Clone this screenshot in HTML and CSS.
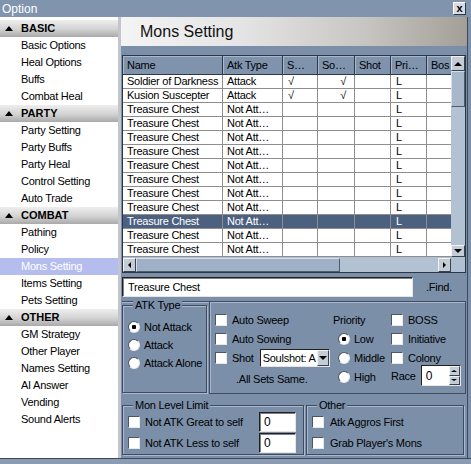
FILE: index.html
```html
<!DOCTYPE html>
<html>
<head>
<meta charset="utf-8">
<title>Option</title>
<link rel="stylesheet" href="styles.css">
</head>
<body>
<div class="window">
  <div class="titlebar"><span class="title">Option</span><span class="close">x</span></div>
  <div class="body">
    <nav class="sidebar">
      <div class="group-head"><span class="tri"></span>BASIC</div>
      <div class="item">Basic Options</div>
      <div class="item">Heal Options</div>
      <div class="item">Buffs</div>
      <div class="item">Combat Heal</div>
      <div class="group-head"><span class="tri"></span>PARTY</div>
      <div class="item">Party Setting</div>
      <div class="item">Party Buffs</div>
      <div class="item">Party Heal</div>
      <div class="item">Control Setting</div>
      <div class="item">Auto Trade</div>
      <div class="group-head"><span class="tri"></span>COMBAT</div>
      <div class="item">Pathing</div>
      <div class="item">Policy</div>
      <div class="item selected">Mons Setting</div>
      <div class="item">Items Setting</div>
      <div class="item">Pets Setting</div>
      <div class="group-head"><span class="tri"></span>OTHER</div>
      <div class="item">GM Strategy</div>
      <div class="item">Other Player</div>
      <div class="item">Names Setting</div>
      <div class="item">AI Answer</div>
      <div class="item">Vending</div>
      <div class="item">Sound Alerts</div>
    </nav>
    <main class="main">
      <div class="heading">Mons Setting</div>
      <div class="grid">
        <div class="grid-left">
          <div class="table-clip">
            <div class="row head"><span>Name</span><span>Atk Type</span><span>S…</span><span>So…</span><span>Shot</span><span>Pri…</span><span>Bos</span></div>
            <div class="row"><span>Soldier of Darkness</span><span>Attack</span><span class="ck-l">√</span><span class="ck-r">√</span><span></span><span class="pri">L</span><span></span></div>
            <div class="row"><span>Kusion Suscepter</span><span>Attack</span><span class="ck-l">√</span><span class="ck-r">√</span><span></span><span class="pri">L</span><span></span></div>
            <div class="row"><span>Treasure Chest</span><span>Not Att…</span><span></span><span></span><span></span><span class="pri">L</span><span></span></div>
            <div class="row"><span>Treasure Chest</span><span>Not Att…</span><span></span><span></span><span></span><span class="pri">L</span><span></span></div>
            <div class="row"><span>Treasure Chest</span><span>Not Att…</span><span></span><span></span><span></span><span class="pri">L</span><span></span></div>
            <div class="row"><span>Treasure Chest</span><span>Not Att…</span><span></span><span></span><span></span><span class="pri">L</span><span></span></div>
            <div class="row"><span>Treasure Chest</span><span>Not Att…</span><span></span><span></span><span></span><span class="pri">L</span><span></span></div>
            <div class="row"><span>Treasure Chest</span><span>Not Att…</span><span></span><span></span><span></span><span class="pri">L</span><span></span></div>
            <div class="row"><span>Treasure Chest</span><span>Not Att…</span><span></span><span></span><span></span><span class="pri">L</span><span></span></div>
            <div class="row"><span>Treasure Chest</span><span>Not Att…</span><span></span><span></span><span></span><span class="pri">L</span><span></span></div>
            <div class="row sel"><span>Treasure Chest</span><span>Not Att…</span><span></span><span></span><span></span><span class="pri">L</span><span></span></div>
            <div class="row"><span>Treasure Chest</span><span>Not Att…</span><span></span><span></span><span></span><span class="pri">L</span><span></span></div>
            <div class="row"><span>Treasure Chest</span><span>Not Att…</span><span></span><span></span><span></span><span class="pri">L</span><span></span></div>
            <div class="row"><span></span><span></span><span></span><span></span><span></span><span></span><span></span></div>
          </div>
          <div class="hscroll">
            <span class="sbtn"><span class="arr-l"></span></span>
            <span class="hthumb"></span>
            <span class="htrack"></span>
            <span class="sbtn"><span class="arr-r"></span></span>
          </div>
        </div>
        <div class="vscroll">
          <span class="sbtn up"><span class="arr-u"></span></span>
          <span class="vthumb"></span>
          <span class="vtrack"></span>
          <span class="sbtn down"><span class="arr-d"></span></span>
          <span class="corner"></span>
        </div>
      </div>
      <div class="search">
        <div class="textbox wide">Treasure Chest</div>
        <span class="find">.Find.</span>
      </div>
      <div class="settings">
        <fieldset class="atk">
          <legend>ATK Type</legend>
          <div class="opt"><span class="radio on"></span>Not Attack</div>
          <div class="opt"><span class="radio"></span>Attack</div>
          <div class="opt"><span class="radio"></span>Attack Alone</div>
        </fieldset>
        <div class="opts">
          <div class="opt"><span class="cb"></span>Auto Sweep</div>
          <div class="lbl">Priority</div>
          <div class="opt"><span class="cb"></span>BOSS</div>

          <div class="opt"><span class="cb"></span>Auto Sowing</div>
          <div class="opt ind"><span class="radio on"></span>Low</div>
          <div class="opt"><span class="cb"></span>Initiative</div>

          <div class="opt"><span class="cb"></span>Shot<span class="select">Soulshot: A<span class="dd"><span class="arr-d"></span></span></span></div>
          <div class="opt ind"><span class="radio"></span>Middle</div>
          <div class="opt"><span class="cb"></span>Colony</div>

          <div class="allsets">.All Sets Same.</div>
          <div class="opt ind"><span class="radio"></span>High</div>
          <div class="opt race">Race<span class="spin"><span class="spin-val">0</span><span class="spin-btns"><span class="sp"><span class="arr-u sm"></span></span><span class="sp"><span class="arr-d sm"></span></span></span></span></div>
        </div>
      </div>
      <div class="limits">
        <fieldset class="mll">
          <legend>Mon Level Limit</legend>
          <div class="lrow"><span class="cb"></span><span class="ltxt">Not ATK Great to self</span><span class="textbox num">0</span></div>
          <div class="lrow"><span class="cb"></span><span class="ltxt">Not ATK Less to self</span><span class="textbox num">0</span></div>
        </fieldset>
        <fieldset class="other">
          <legend>Other</legend>
          <div class="lrow"><span class="cb"></span><span class="ltxt">Atk Aggros First</span></div>
          <div class="lrow"><span class="cb"></span><span class="ltxt">Grab Player's Mons</span></div>
        </fieldset>
      </div>
    </main>
  </div>
  <div class="statusbar"></div>
</div>
</body>
</html>
```

FILE: styles.css
```css
* { box-sizing: border-box; }
html, body { margin: 0; padding: 0; }
body {
  width: 471px;
  height: 464px;
  overflow: hidden;
  font-family: "Liberation Sans", Arial, sans-serif;
  font-size: 11px;
  letter-spacing: -0.25px;
  color: #000;
  background: #7b8fa9;
}
.window { width: 471px; height: 464px; display: flex; flex-direction: column; }

.titlebar {
  height: 17px;
  background: #8094ae;
  display: flex;
  align-items: center;
  justify-content: space-between;
  padding: 0 5px 0 2px;
}
.title { color: #fff; font-size: 12px; letter-spacing: 0; }
.close {
  width: 13px; height: 13px;
  background: #d8dce2;
  border: 1px solid;
  border-color: #fff #303840 #303840 #fff;
  font-weight: bold;
  font-size: 11px;
  line-height: 10px;
  text-align: center;
}

.body { height: 441px; display: flex; }

.sidebar {
  width: 121px;
  background: #fff;
  border-right: 3px solid #c2c6cc;
  padding-top: 3px;
}
.group-head {
  height: 17px;
  line-height: 17px;
  font-weight: bold;
  letter-spacing: 0;
  display: flex;
  align-items: center;
  background: linear-gradient(to bottom, #eeeeee 0%, #d2d2d2 55%, #a9a9a9 100%);
}
.tri {
  width: 0; height: 0;
  margin: 0 8px 1px 5px;
  border-left: 4px solid transparent;
  border-right: 4px solid transparent;
  border-bottom: 5px solid #000;
}
.item { height: 17px; line-height: 17px; padding-left: 21px; }
.item.selected { background: #b5bdef; color: #fff; }

.main {
  width: 347px;
  border-right: 1px solid #3c495c;
  display: flex;
  flex-direction: column;
}
.heading {
  height: 29px;
  line-height: 29px;
  padding-left: 19px;
  font-size: 16px;
  letter-spacing: 0;
  color: #111;
  background: linear-gradient(to right, #f4f4f4 0%, #e4e4e4 35%, #c8c6c2 70%, #a39f98 100%);
}

.grid {
  margin: 9px 0 0 1px;
  width: 344px;
  height: 218px;
  border: 1px solid #2c3646;
  display: flex;
}
.grid-left { width: 328px; display: flex; flex-direction: column; }
.table-clip { height: 201px; overflow: hidden; background: #fff; }
.row {
  display: grid;
  grid-template-columns: 100px 60px 35px 37px 36px 36px 60px;
  height: 14px;
  border-bottom: 1px solid #8e8e8e;
  white-space: nowrap;
}
.row span {
  border-right: 1px solid #8e8e8e;
  padding-left: 4px;
  line-height: 13px;
  overflow: hidden;
}
.row.head { height: 19px; border-bottom: 1px solid #2e3848; background: #7f93ad; }
.row.head span {
  line-height: 18px;
  border-right: 1px solid #2e3848;
  box-shadow: inset 1px 1px 0 #a9b9cd;
}
.row.sel { background: #4c6080; color: #fff; }
.row .ck-l { padding-left: 5px; }
.row .ck-r { padding-left: 0; padding-right: 8px; text-align: right; }
.row .pri { padding-left: 5px; }

.hscroll { height: 15px; display: flex; background: #b0bfd1; border-top: 1px solid #b0bfd1; }
.sbtn {
  width: 13px;
  height: 14px;
  background: #c4ccd6;
  border: 1px solid;
  border-color: #f0f2f4 #3a4450 #3a4450 #f0f2f4;
  display: flex;
  align-items: center;
  justify-content: center;
  flex: none;
}
.hthumb {
  width: 204px;
  background: #9fb1c6;
  border: 1px solid;
  border-color: #d4dde8 #4e5c70 #4e5c70 #d4dde8;
}
.htrack { flex: 1; background: #b3c2d3; }

.vscroll { width: 14px; display: flex; flex-direction: column; background: #b3c2d3; }
.vscroll .sbtn { width: 14px; height: 15px; }
.vscroll .sbtn.down { height: 12px; }
.vthumb {
  height: 36px;
  background: #a8b8cb;
  border: 1px solid;
  border-color: #d4dde8 #4e5c70 #4e5c70 #d4dde8;
}
.vtrack { flex: 1; }
.corner { height: 15px; background: #b0bfd1; }

.arr-l { width: 0; height: 0; border-top: 3px solid transparent; border-bottom: 3px solid transparent; border-right: 3px solid #000; }
.arr-r { width: 0; height: 0; border-top: 3px solid transparent; border-bottom: 3px solid transparent; border-left: 3px solid #000; }
.arr-u { width: 0; height: 0; border-left: 4px solid transparent; border-right: 4px solid transparent; border-bottom: 4px solid #000; }
.arr-d { width: 0; height: 0; border-left: 4px solid transparent; border-right: 4px solid transparent; border-top: 4px solid #000; }
.arr-u.sm { border-left-width: 3px; border-right-width: 3px; border-bottom-width: 2px; }
.arr-d.sm { border-left-width: 3px; border-right-width: 3px; border-top-width: 2px; }

.search { margin-top: 4px; height: 20px; display: flex; align-items: center; }
.textbox {
  background: #fff;
  border: 1px solid;
  border-color: #202020 #e6e6e6 #e6e6e6 #202020;
  box-shadow: inset 1px 1px 0 #808080;
  padding-left: 5px;
  display: flex;
  align-items: center;
}
.textbox.wide { margin-left: 1px; width: 291px; height: 20px; }
.find { margin-left: 13px; }

.settings {
  margin-top: 4px;
  margin-left: 1px;
  width: 344px;
  height: 93px;
  display: flex;
  border-top: 1px solid #3e4b60;
  box-shadow: inset 0 1px 0 #a9b8cc;
}
fieldset {
  margin: 0;
  padding: 0;
  border: 1px solid #3e4b60;
  box-shadow: inset 1px 1px 0 #a9b8cc, 1px 1px 0 #a9b8cc;
}
legend {
  padding: 0 2px;
  margin-left: 5px;
  line-height: 12px;
  background: #7b8fa9;
}
.atk {
  margin-top: -3px;
  width: 85px;
  height: 94px;
  padding: 7px 0 0 5px;
}
.opt { display: flex; align-items: center; height: 19px; white-space: nowrap; }
.atk .opt { height: 18px; }
.radio {
  width: 12px; height: 12px;
  border-radius: 50%;
  background: #fff;
  border: 1px solid;
  border-color: #4e5662 #e8e8e8 #e8e8e8 #4e5662;
  margin-right: 4px;
  flex: none;
}
.radio.on { background: radial-gradient(circle, #000 0 2px, #fff 2.5px); }
.cb {
  width: 12px; height: 12px;
  background: #fff;
  border: 1px solid;
  border-color: #4e5662 #e8e8e8 #e8e8e8 #4e5662;
  margin-right: 5px;
  flex: none;
}
.opts {
  flex: 1;
  margin-left: 2px;
  border-left: 1px solid #3e4b60;
  box-shadow: inset 1px 0 0 #a9b8cc;
  border-right: 1px solid #3e4b60;
  border-bottom: 1px solid #3e4b60;
  padding: 8px 0 0 5px;
  display: grid;
  grid-template-columns: 118px 58px auto;
  grid-template-rows: repeat(4, 19px);
}
.lbl { display: flex; align-items: center; }
.opt.ind { padding-left: 5px; }
.select {
  margin-left: 6px;
  width: 70px;
  height: 18px;
  background: #fff;
  border: 1px solid;
  border-color: #202020 #e6e6e6 #e6e6e6 #202020;
  display: flex;
  align-items: center;
  padding-left: 2px;
  overflow: hidden;
  position: relative;
  white-space: nowrap;
}
.dd {
  position: absolute;
  right: 0; top: 0;
  width: 12px; height: 16px;
  background: #c4ccd6;
  border: 1px solid;
  border-color: #f0f2f4 #3a4450 #3a4450 #f0f2f4;
  display: flex; align-items: center; justify-content: center;
}
.allsets { padding: 6px 0 0 21px; }
.race { height: 21px; align-self: end; }
.spin {
  margin-left: 5px;
  width: 40px; height: 21px;
  background: #fff;
  border: 1px solid;
  border-color: #202020 #e6e6e6 #e6e6e6 #202020;
  display: flex;
  justify-content: space-between;
}
.spin-val { padding: 3px 0 0 4px; font-size: 12px; }
.spin-btns { display: flex; flex-direction: column; width: 11px; }
.sp {
  flex: 1;
  background: #c4ccd6;
  border: 1px solid;
  border-color: #f0f2f4 #3a4450 #3a4450 #f0f2f4;
  display: flex; align-items: center; justify-content: center;
}

.limits { margin-top: 5px; margin-left: 1px; display: flex; gap: 2px; }
.limits fieldset { height: 56px; padding: 0 0 0 5px; }
.mll { width: 182px; }
.other { width: 158px; }
.lrow { display: flex; align-items: center; height: 21px; }
.ltxt { white-space: nowrap; }
.mll .ltxt { width: 114px; }
.textbox.num { width: 37px; height: 20px; font-size: 12px; padding-left: 4px; }
.other .cb { margin-right: 6px; }

.statusbar { flex: 1; border-top: 1px solid #3c495c; background: #8a9bb2; }
```
